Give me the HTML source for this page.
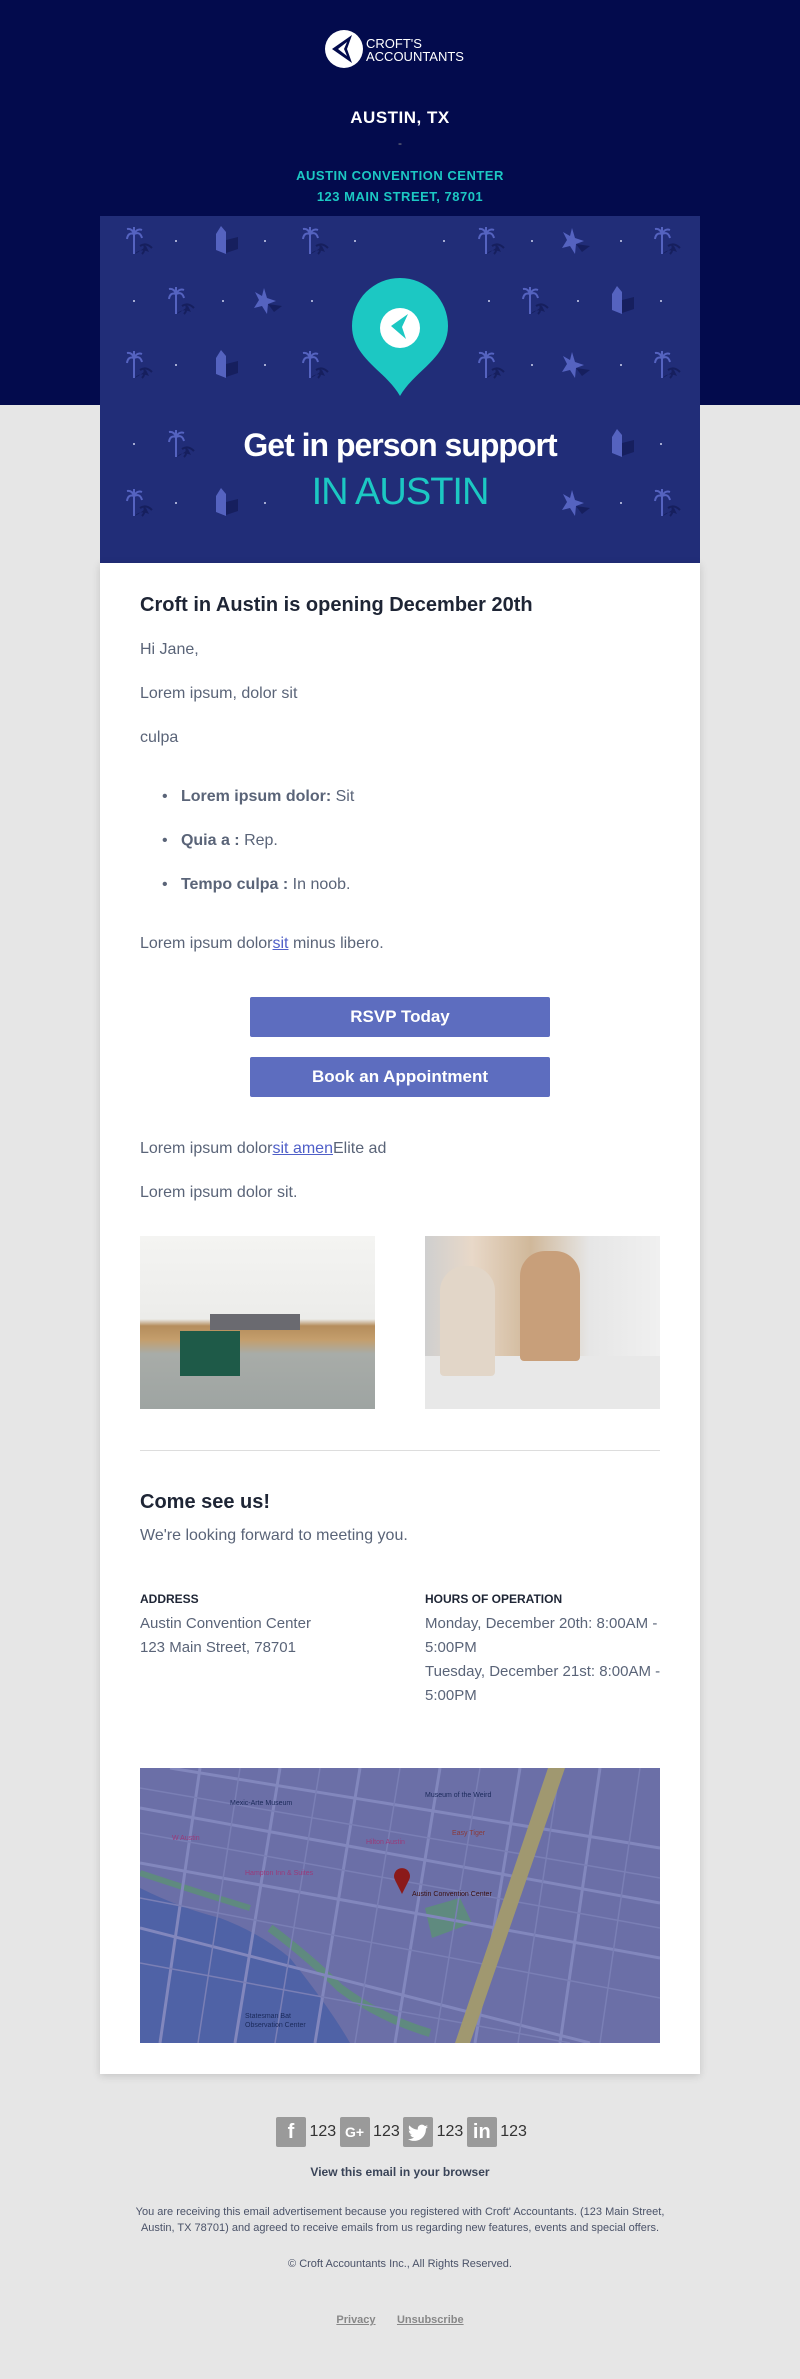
<!DOCTYPE html>
<html><head><meta charset="utf-8"><style>
*{margin:0;padding:0;box-sizing:border-box}
body{width:800px;height:2379px;background:#e6e6e6;font-family:"Liberation Sans",Arial,sans-serif;position:relative;overflow:hidden}
.abs{position:absolute}
.c{text-align:center;width:800px;left:0}
.p{position:absolute;left:140px;font-size:16px;color:#5a6478;white-space:nowrap}
.h{font-size:20px;font-weight:bold;color:#1e2535}
.btn{position:absolute;left:250px;width:300px;height:40px;background:#5d6dbf;color:#fff;font-weight:bold;font-size:17px;text-align:center;line-height:40px;border-radius:2px}
a{color:#4f5fc8;text-decoration:underline}
.soc{display:inline-block;width:30px;height:30px;background:#9a9a9a;border-radius:2px;vertical-align:middle;color:#fff;font-weight:bold;text-align:center;line-height:30px;font-size:20px}
</style></head><body>
<div class="abs" style="left:0;top:0;width:800px;height:405px;background:#030b4d"></div>
<svg class="abs" style="left:325px;top:30px" width="40" height="40" viewBox="0 0 40 40"><circle cx="19" cy="19" r="19" fill="#fff"/><path d="M27 5 L7 19 L27 33 L22 19 Z" fill="#030b4d"/><path d="M22 12 L13 19 L22 26 L19 19Z" fill="#fff"/></svg>
<div class="abs" style="left:366px;top:37px;color:#fff;font-size:13px;line-height:13px">CROFT'S<br>ACCOUNTANTS</div>
<div class="abs c" style="top:108px;color:#fff;font-weight:bold;font-size:17px;letter-spacing:0.5px">AUSTIN, TX</div>
<div class="abs c" style="top:136px;color:#888;font-size:12px">-</div>
<div class="abs c" style="top:165px;color:#1cc8c3;font-weight:bold;font-size:13px;line-height:21px;letter-spacing:0.5px">AUSTIN CONVENTION CENTER<br>123 MAIN STREET, 78701</div>
<div class="abs" style="left:100px;top:216px;width:600px;height:347px;background:#212d78;overflow:hidden">
<svg width="600" height="347" style="position:absolute;left:0;top:0">
<defs>
<g id="palm"><path d="M7 28 q4 -6 14 -2 l-3 -6 q-4 4 -11 8z" fill="#161f5e"/><path d="M6 28 V8" stroke="#5563c0" stroke-width="2" fill="none"/><path d="M6 8 q-6 -2 -7 5 M6 8 q6 -3 8 4 M6 8 q-2 -6 -7 -5 M6 8 q3 -6 8 -4 M6 8 q0 -6 0 -7" stroke="#5563c0" stroke-width="2" fill="none"/><path d="M12 20 q6 -4 12 2 M16 18 q2 6 -2 10" stroke="#161f5e" stroke-width="2" fill="none"/></g>
<g id="house"><path d="M10 14 l12 -3 v12 l-12 4z" fill="#161f5e"/><path d="M0 8 l5 -8 l5 6 v22 l-10 -4z" fill="#5563c0"/></g>
<g id="star"><path d="M10 16 l14 2 l-8 6z" fill="#161f5e"/><path d="M6 0 l3 10 l9 3 l-8 3 l-1 10 l-5 -8 l-8 2 l5 -8 l-4 -8 l7 4z" fill="#5563c0"/></g>
</defs>
<g fill="#cfd3ee">
<circle cx="76" cy="25" r="1"/><circle cx="165" cy="25" r="1"/><circle cx="255" cy="25" r="1"/><circle cx="344" cy="25" r="1"/><circle cx="432" cy="25" r="1"/><circle cx="521" cy="25" r="1"/>
<circle cx="34" cy="85" r="1"/><circle cx="123" cy="85" r="1"/><circle cx="212" cy="85" r="1"/><circle cx="389" cy="85" r="1"/><circle cx="478" cy="85" r="1"/><circle cx="561" cy="85" r="1"/>
<circle cx="76" cy="149" r="1"/><circle cx="165" cy="149" r="1"/><circle cx="432" cy="149" r="1"/><circle cx="521" cy="149" r="1"/>
<circle cx="34" cy="228" r="1"/><circle cx="561" cy="228" r="1"/>
<circle cx="76" cy="287" r="1"/><circle cx="165" cy="287" r="1"/><circle cx="521" cy="287" r="1"/>
</g>
<use href="#palm" x="28" y="10"/><use href="#house" x="116" y="10"/><use href="#palm" x="204" y="10"/><use href="#palm" x="380" y="10"/><use href="#star" x="466" y="12"/><use href="#palm" x="556" y="10"/>
<use href="#palm" x="70" y="70"/><use href="#star" x="158" y="72"/><use href="#palm" x="424" y="70"/><use href="#house" x="512" y="70"/>
<use href="#palm" x="28" y="134"/><use href="#house" x="116" y="134"/><use href="#palm" x="204" y="134"/><use href="#palm" x="380" y="134"/><use href="#star" x="466" y="136"/><use href="#palm" x="556" y="134"/>
<use href="#palm" x="70" y="213"/><use href="#house" x="512" y="213"/>
<use href="#palm" x="28" y="272"/><use href="#house" x="116" y="272"/><use href="#star" x="466" y="274"/><use href="#palm" x="556" y="272"/>
<path d="M300 180 C286 155 252 142 252 110 A48 48 0 0 1 348 110 C348 142 314 155 300 180Z" fill="#1cc8c3"/>
<circle cx="300" cy="112" r="20" fill="#fff"/>
<path d="M308 98 L291 110 L306 123 L302 111Z" fill="#1cc8c3"/>
</svg>
<div style="position:absolute;left:0;top:211px;width:600px;text-align:center;color:#fff;font-weight:bold;font-size:32px;letter-spacing:-1px">Get in person support</div>
<div style="position:absolute;left:0;top:255px;width:600px;text-align:center;color:#1cc8c3;font-size:38px;letter-spacing:-1px">IN AUSTIN</div>
</div>
<div class="abs" style="left:100px;top:563px;width:600px;height:1511px;background:#fff;box-shadow:0 2px 8px rgba(0,0,0,.15)"></div>
<div class="p h" style="top:594px">Croft in Austin is opening December 20th</div>
<div class="p" style="top:641px">Hi Jane,</div>
<div class="p" style="top:685px">Lorem ipsum, dolor sit</div>
<div class="p" style="top:729px">culpa</div>
<div class="p" style="top:788px;left:162px">•&nbsp;&nbsp;&nbsp;<b>Lorem ipsum dolor:</b> Sit</div>
<div class="p" style="top:832px;left:162px">•&nbsp;&nbsp;&nbsp;<b>Quia a :</b> Rep.</div>
<div class="p" style="top:876px;left:162px">•&nbsp;&nbsp;&nbsp;<b>Tempo culpa :</b> In noob.</div>
<div class="p" style="top:935px">Lorem ipsum dolor<a>sit</a> minus libero.</div>
<div class="btn" style="top:997px">RSVP Today</div>
<div class="btn" style="top:1057px">Book an Appointment</div>
<div class="p" style="top:1140px">Lorem ipsum dolor<a>sit amen</a>Elite ad</div>
<div class="p" style="top:1184px">Lorem ipsum dolor sit.</div>
<div class="abs" style="left:140px;top:1236px;width:235px;height:173px;background:linear-gradient(#f4f4f2 0,#ececea 48%,#b58d5c 52%,#c49e6c 60%,#a8aca8 68%,#9ea4a2 100%)"><div style="position:absolute;left:40px;top:95px;width:60px;height:45px;background:#1e5a48"></div><div style="position:absolute;left:70px;top:78px;width:90px;height:16px;background:#6a6a70"></div></div>
<div class="abs" style="left:425px;top:1236px;width:235px;height:173px;background:linear-gradient(90deg,#cfcfcf 0,#e8d8c8 20%,#d0b89a 45%,#e6e6e6 70%,#f0f0f0 100%)"><div style="position:absolute;left:0;top:120px;width:235px;height:53px;background:#e8e8e8"></div><div style="position:absolute;left:95px;top:15px;width:60px;height:110px;background:#c89f7a;border-radius:25px 25px 4px 4px"></div><div style="position:absolute;left:15px;top:30px;width:55px;height:110px;background:#e2d6c8;border-radius:25px 25px 4px 4px"></div></div>
<div class="abs" style="left:140px;top:1450px;width:520px;height:1px;background:#ddd"></div>
<div class="p h" style="top:1491px">Come see us!</div>
<div class="p" style="top:1527px">We're looking forward to meeting you.</div>
<div class="p" style="top:1592px;font-size:12px;font-weight:bold;color:#1e2535">ADDRESS</div>
<div class="p" style="top:1612px;font-size:15px;line-height:24px">Austin Convention Center<br>123 Main Street, 78701</div>
<div class="p" style="left:425px;top:1592px;font-size:12px;font-weight:bold;color:#1e2535">HOURS OF OPERATION</div>
<div class="p" style="left:425px;top:1612px;font-size:15px;line-height:24px">Monday, December 20th: 8:00AM -<br>5:00PM<br>Tuesday, December 21st: 8:00AM -<br>5:00PM</div>
<svg class="abs" style="left:140px;top:1768px" width="520" height="275" viewBox="0 0 520 275">
<rect width="520" height="275" fill="#6b6fa7"/>
<path d="M0 120 Q40 140 80 150 Q120 165 150 190 Q190 240 210 275 L0 275Z" fill="#4f62a6"/>
<path d="M0 105 Q60 125 110 140" stroke="#5f8a7f" stroke-width="6" fill="none"/>
<path d="M130 160 Q170 190 200 220 Q240 250 290 265" stroke="#5f8a7f" stroke-width="8" fill="none"/>
<path d="M285 140 l35 -10 l12 25 l-40 15z" fill="#5f8a7f"/>
<g stroke="#8287bd" stroke-width="3" fill="none">
<path d="M0 95 L520 190 M0 40 L520 135 M0 160 L450 275 M30 0 L520 80"/>
<path d="M60 0 L20 275 M140 0 L95 275 M220 0 L175 275 M300 0 L255 275 M380 0 L335 275 M460 0 L420 275"/>
</g>
<g stroke="#7a7fb5" stroke-width="1.5" fill="none">
<path d="M0 20 L520 110 M0 65 L520 160 M0 130 L520 230 M0 195 L430 275"/>
<path d="M100 0 L58 275 M180 0 L135 275 M260 0 L215 275 M340 0 L295 275 M420 0 L378 275 M500 0 L460 275"/>
</g>
<path d="M408 0 L425 0 L330 275 L315 275Z" fill="#a09870"/>
<path d="M255 112 a8 8 0 1 1 14 0 l-7 14z" fill="#8b1a1a"/>
<g font-family="Liberation Sans" font-size="7">
<text x="272" y="128" fill="#3a1010">Austin Convention Center</text>
<text x="90" y="37" fill="#1b2a5a">Mexic-Arte Museum</text>
<text x="285" y="29" fill="#1b2a5a">Museum of the Weird</text>
<text x="312" y="67" fill="#8a3a3a">Easy Tiger</text>
<text x="32" y="72" fill="#9a3a7a">W Austin</text>
<text x="226" y="76" fill="#9a3a7a">Hilton Austin</text>
<text x="105" y="107" fill="#9a3a7a">Hampton Inn &amp; Suites</text>
<text x="105" y="250" fill="#1b2a5a">Statesman Bat</text>
<text x="105" y="259" fill="#1b2a5a">Observation Center</text>
</g>
</svg>
<div class="abs" style="left:276px;top:2117px;font-size:16px;color:#333;white-space:nowrap;line-height:30px;word-spacing:-1px"><span class="soc">f</span> 123 <span class="soc" style="font-size:14px">G+</span> 123 <span class="soc"><svg width="20" height="18" viewBox="0 0 24 20" style="vertical-align:middle"><path d="M24 2.4c-.9.4-1.8.6-2.8.8 1-.6 1.8-1.6 2.2-2.7-1 .6-2 1-3.1 1.2C19.4.7 18.1 0 16.6 0c-2.7 0-4.9 2.2-4.900 4.9 0 .4 0 .8.1 1.1C7.7 5.8 4.1 3.9 1.7.9c-.4.7-.7 1.6-.7 2.5 0 1.7.9 3.2 2.2 4.1-.8 0-1.600-.2-2.200-.6v.1c0 2.4 1.7 4.4 3.9 4.8-.4.1-.8.2-1.3.2-.3 0-.6 0-.9-.1.6 2 2.4 3.4 4.6 3.4-1.7 1.3-3.8 2.1-6.1 2.1-.4 0-.8 0-1.2-.1 2.2 1.4 4.8 2.2 7.5 2.2 9.1 0 14-7.5 14-14v-.6c1-.7 1.8-1.6 2.5-2.5z" fill="#fff"/></svg></span> 123 <span class="soc">in</span> 123</div>
<div class="abs c" style="top:2165px;font-size:12px;font-weight:bold;color:#3a4458">View this email in your browser</div>
<div class="abs" style="left:130px;top:2204px;width:540px;text-align:center;font-size:11px;line-height:16px;color:#4a5268">You are receiving this email advertisement because you registered with Croft' Accountants. (123 Main Street, Austin, TX 78701) and agreed to receive emails from us regarding new features, events and special offers.</div>
<div class="abs c" style="top:2258px;font-size:11px;color:#4a5268">© Croft Accountants Inc., All Rights Reserved.</div>
<div class="abs c" style="top:2314px;font-size:11px;font-weight:bold;color:#888"><u>Privacy</u>&nbsp;&nbsp;&nbsp;&nbsp;&nbsp;&nbsp;&nbsp;<u>Unsubscribe</u></div>
</body></html>
